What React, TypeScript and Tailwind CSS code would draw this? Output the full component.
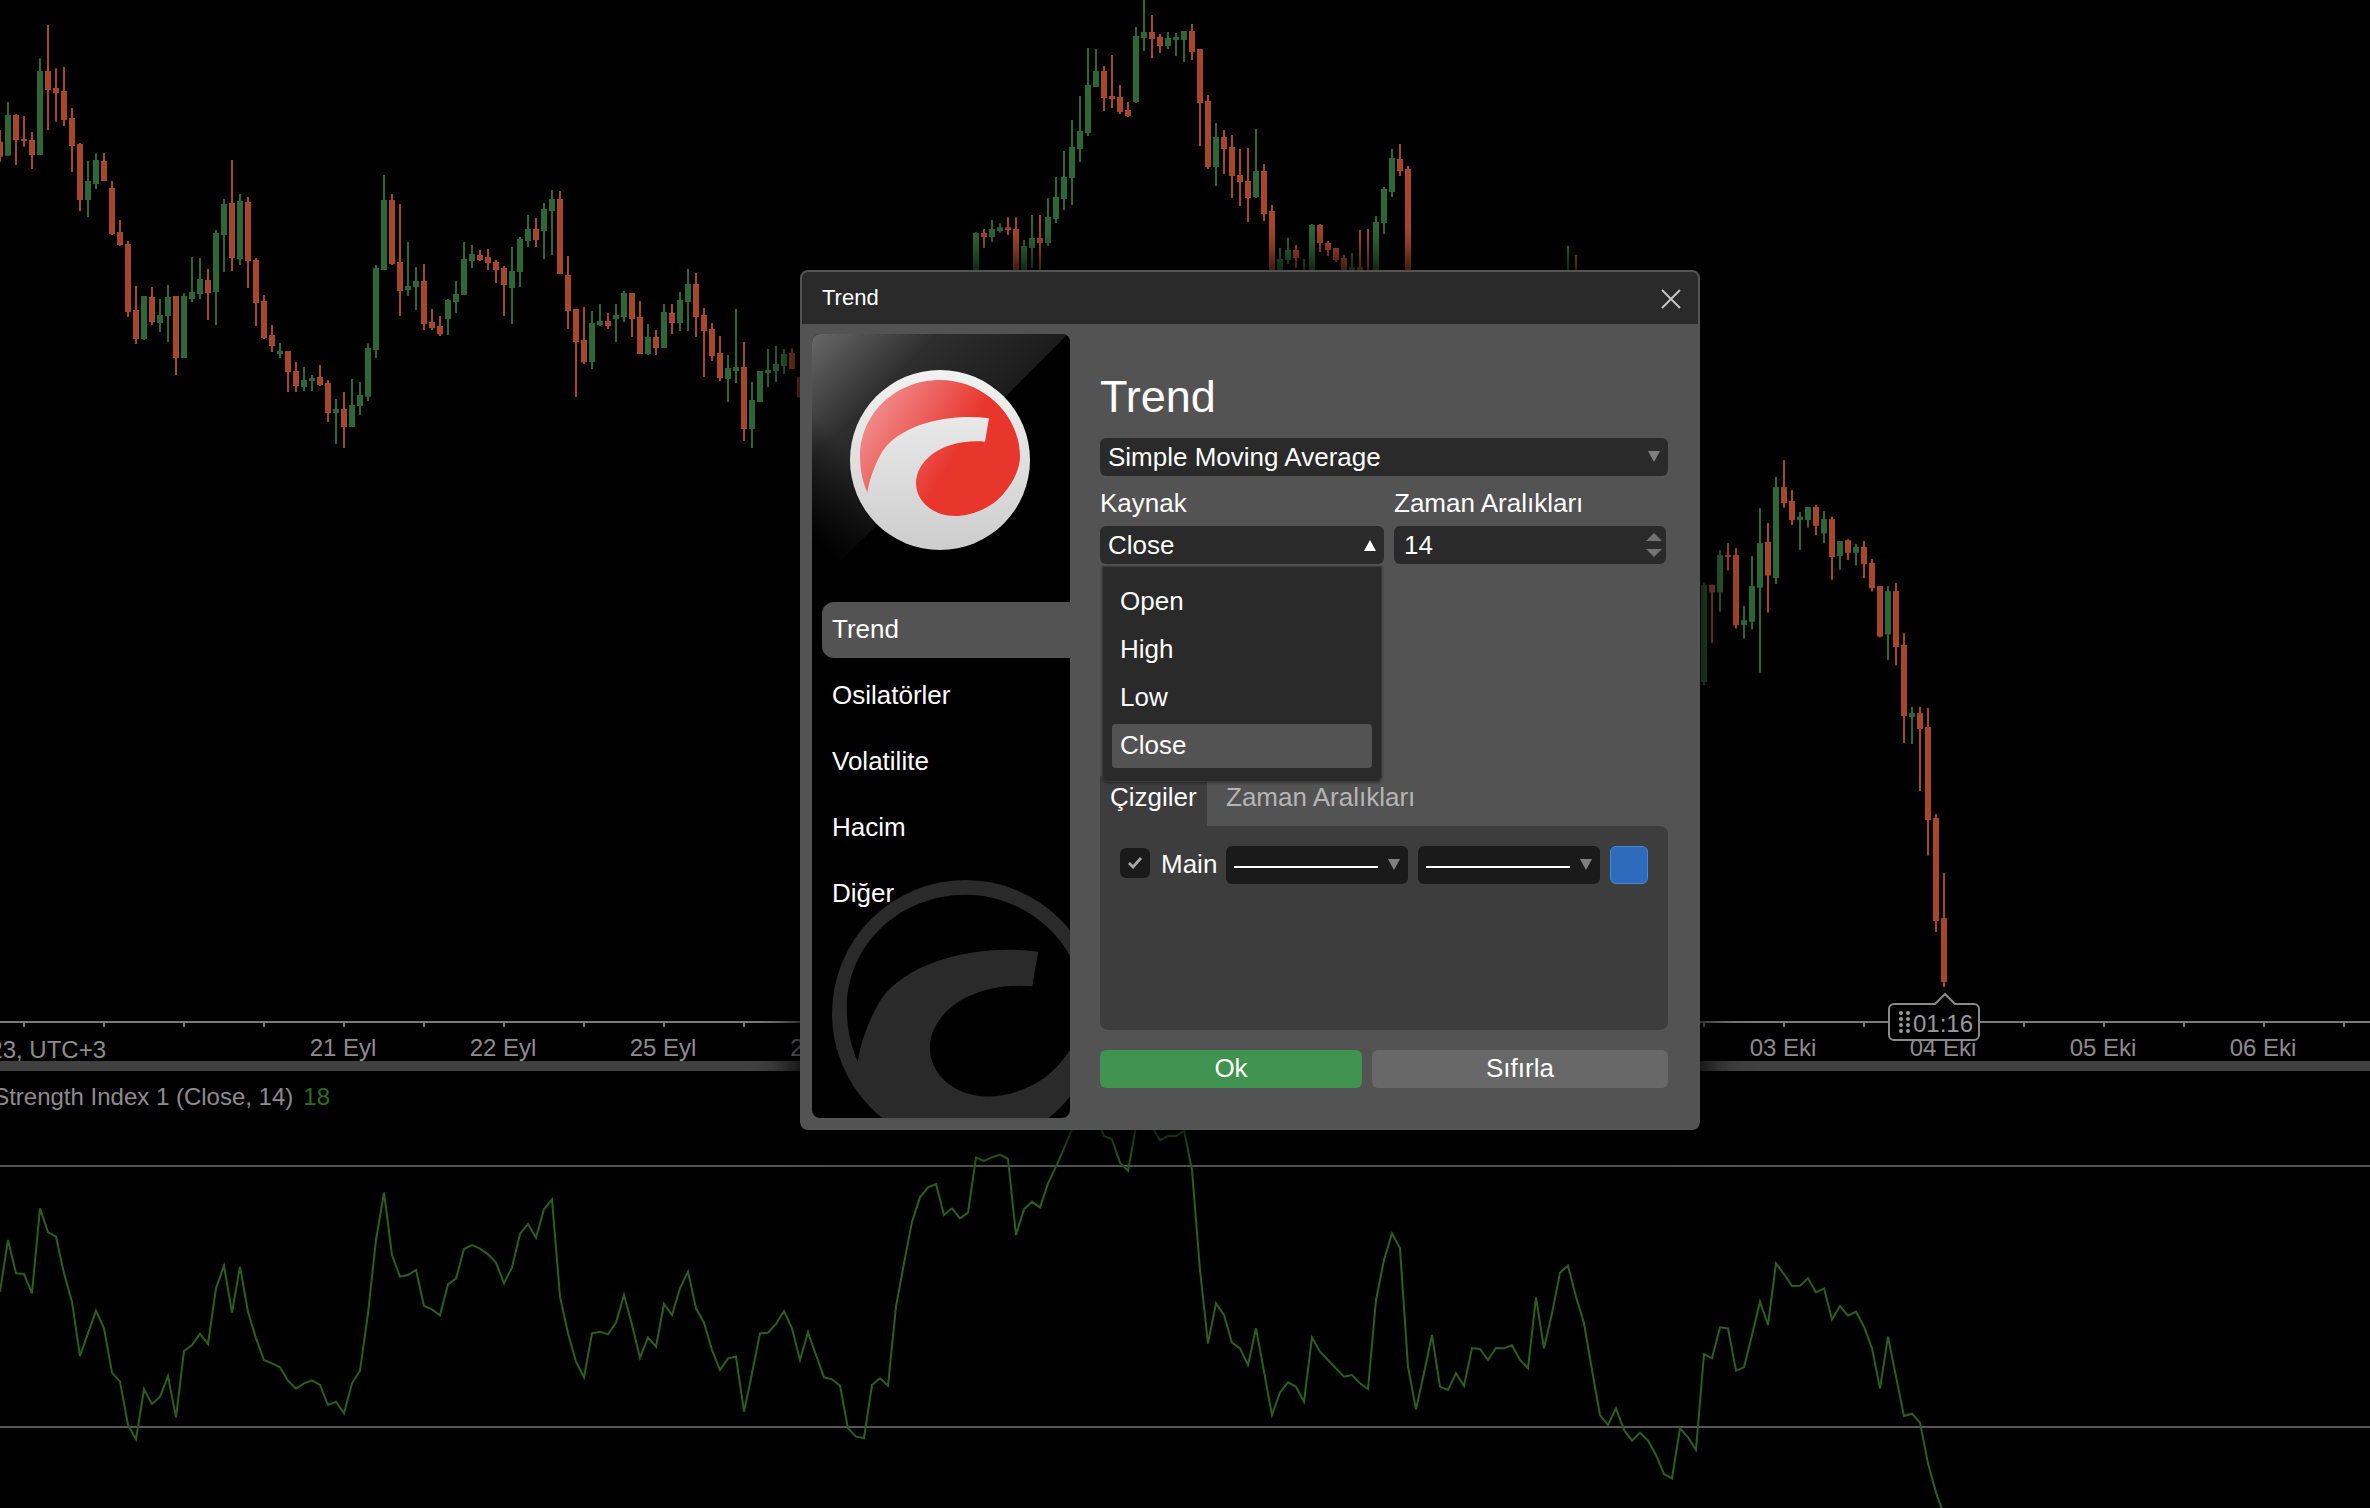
import React from "react";

// [wickTop, bodyTop, bodyBottom, wickBottom, isGreen]
type Row = [number, number, number, number, number];

const LEFT: Row[] = [
  [390,425,470,485,0],[306,345,467,467,1],[342,345,420,495,0],[348,417,423,440,0],[396,420,465,507,0],[175,213,465,465,1],
  [75,213,270,390,0],[205,264,279,365,0],[201,273,360,378,0],[324,354,438,516,0],[429,432,600,633,0],[483,543,600,651,1],
  [460,480,552,567,1],[459,483,543,543,0],[543,564,702,705,0],[660,696,735,738,0],[723,732,936,951,0],[858,930,1017,1032,0],
  [888,888,1017,1020,1],[861,891,966,975,0],[897,945,969,996,1],[855,891,948,1026,1],[888,888,1074,1125,0],[880,888,1074,1074,1],
  [771,876,897,906,1],[774,837,882,897,1],[807,840,879,960,0],[690,699,876,975,1],[597,612,705,816,1],[480,609,774,813,0],
  [582,603,777,795,1],[591,606,783,864,0],[774,780,909,978,0],[885,903,1014,1017,0],[975,1005,1038,1056,0],[1029,1052,1062,1074,1],
  [1053,1053,1116,1176,0],[1086,1113,1158,1176,0],[1101,1140,1161,1173,1],[1125,1134,1143,1173,1],[1095,1131,1155,1158,0],[1140,1149,1239,1266,0],
  [1197,1227,1239,1332,1],[1176,1227,1281,1344,0],[1137,1215,1281,1281,1],[1146,1185,1218,1245,1],[1030,1044,1190,1203,1],[795,804,1050,1074,1],
  [525,600,810,810,1],[582,600,792,795,0],[612,786,873,948,0],[726,858,870,888,1],[801,843,861,930,1],[792,843,972,990,0],
  [927,966,984,990,0],[948,978,1003,1008,0],[897,900,957,1005,1],[843,882,906,939,1],[726,777,885,885,1],[735,762,783,804,1],
  [750,765,780,783,0],[747,771,789,810,0],[780,786,810,849,0],[798,804,855,948,0],[741,813,864,972,1],[711,717,816,861,1],
  [645,687,723,741,1],[654,687,720,741,0],[609,627,693,777,1],[570,597,633,765,1],[573,597,822,822,0],[768,825,933,987,0],
  [927,927,1026,1191,0],[921,1020,1087,1092,0],[933,969,1086,1107,1],[912,963,975,978,1],[939,963,978,987,0],[912,945,957,1026,1],
  [873,879,951,966,1],[879,879,957,1011,0],[903,951,1062,1062,0],[972,1011,1062,1065,1],[990,1011,1044,1065,0],[912,936,1044,1044,1],
  [912,939,969,1002,0],[876,900,969,993,1],[807,852,906,993,1],[819,852,951,1011,0],[924,945,993,1131,0],[969,987,1068,1083,0],
  [1008,1059,1134,1143,0],[1065,1104,1137,1206,1],[927,1101,1113,1149,1],[1026,1101,1287,1323,0],[1146,1200,1287,1344,1],[1113,1113,1206,1206,1],
  [1047,1110,1119,1161,1],[1038,1092,1113,1146,1],[1047,1062,1098,1122,1],[1045,1059,1107,1107,0],[1132,1132,1192,1192,0],
];

const TOP: Row[] = [
  [697,699,815,815,1],[687,699,711,744,0],[660,687,711,726,1],[670,682,693,698,1],[652,682,690,705,0],[652,687,815,815,0],
  [720,738,815,815,1],[645,714,744,804,1],[645,714,729,815,0],[595,651,729,738,1],[531,591,657,669,1],[453,531,597,630,1],
  [360,441,534,615,1],[288,393,447,486,1],[144,255,399,408,1],[147,213,261,261,1],[198,213,294,333,0],[165,288,297,324,0],
  [255,291,336,342,0],[306,330,348,351,0],[81,108,306,309,1],[0,96,114,153,1],[45,96,117,174,0],[102,111,138,159,0],
  [96,114,138,147,1],[99,111,120,168,1],[93,93,120,186,1],[72,93,156,180,0],[147,147,309,438,0],[285,303,501,507,0],
  [369,411,501,558,1],[390,411,447,522,0],[405,441,528,594,0],[447,525,546,618,0],[444,543,594,666,0],[387,513,591,594,1],
  [492,513,642,663,0],[615,633,815,815,0],[744,777,815,815,1],[714,750,780,792,1],[735,750,774,804,0],[777,815,815,815,1],
  [672,675,815,815,1],[672,675,729,756,0],[723,729,750,768,0],[744,744,780,786,0],[765,774,815,815,0],[759,801,815,815,1],
  [690,801,815,815,0],[687,815,815,815,0],[648,666,815,815,1],[561,567,669,702,1],[447,474,576,591,1],[432,477,513,528,0],
  [498,507,815,815,0],
];

const FAR: Row[] = [
  [738,815,815,815,1],[765,815,815,815,0],
];

const RIGHT: Row[] = [
  [338,344,575,582,1],[344,344,362,482,0],[262,273,362,408,1],[245,273,278,310,0],[257,273,440,448,0],[394,428,440,472,1],
  [276,347,432,450,1],[162,245,351,553,1],[197,242,322,410,0],[88,112,328,342,1],[48,112,150,161,0],[119,145,190,202,0],
  [171,182,190,261,1],[159,159,190,208,1],[154,159,204,226,0],[169,188,222,245,1],[182,188,278,332,0],[240,240,276,308,1],
  [236,238,268,285,0],[247,254,268,298,1],[240,254,295,328,0],[283,292,352,360,0],[347,347,467,469,0],[347,359,462,523,1],
  [340,359,492,535,0],[459,487,656,720,0],[634,649,658,722,1],[634,649,687,834,0],[637,682,903,987,0],[889,898,1143,1169,0],
  [1029,1136,1288,1300,0],
];

const RSI_LEFT = [
  875,720,820,822,880,625,696,710,820,905,1068,1000,932,985,1118,1145,1275,1318,1168,1212,1190,1128,1252,1053,1035,1002,1032,865,797,938,
  800,935,1015,1080,1090,1102,1142,1166,1150,1141,1155,1215,1205,1240,1150,1112,940,720,578,765,830,825,810,918,928,946,853,836,747,735,
  746,763,788,850,802,702,672,713,628,598,890,1000,1085,1132,1000,995,1003,968,885,975,1073,1012,1040,912,945,865,815,925,968,1050,
  1110,1075,1070,1235,1120,1000,998,972,933,985,1080,
];

const RSI_MID = [
  697,765,832,838,857,985,1010,1014,855,835,857,620,490,365,292,262,252,345,325,355,338,173,183,172,164,177,405,328,305,323,
  250,200,145,88,40,20,40,108,118,188,212,80,40,80,121,108,108,92,210,510,730,610,645,728,745,795,685,815,945,878,
  847,860,905,712,755,780,805,830,825,850,867,600,480,400,445,800,928,820,705,860,870,820,858,744,747,780,744,745,736,780,
  805,592,745,640,518,497,590,670,810,945,975,925,990,1022,998,1022,1065,1122,1135,985,1012,1050,
];

const RSI_RIGHT = [
  1062,1075,982,985,1112,1102,1005,905,975,790,822,858,857,835,877,865,958,918,947,935,980,1045,1165,1010,1130,1248,1241,1268,1390,1478,1545,
];

const rsiPoints = [
  ...RSI_LEFT.map((z, i) => `${i * 8},${1000 + z / 3}`),
  ...RSI_MID.map((z, i) => `${(101 + i) * 8},${1100 + z / 3}`),
  ...RSI_RIGHT.map((z, i) => `${(213 + i) * 8},${1000 + z / 3}`),
].join(" ");

const Candles: React.FC<{ rows: Row[]; start: number; base?: number; scale?: number }> = ({ rows, start, base = 0, scale = 3 }) => (
  <>
    {rows.map((r, i) => {
      const x = (start + i) * 8;
      const fill = r[4] ? "#2e6636" : "#a6462a";
      return (
        <g key={i} fill={fill}>
          <rect x={x - 1} y={base + r[0] / scale} width={2} height={(r[3] - r[0]) / scale} />
          <rect x={x - 3} y={base + r[1] / scale} width={6} height={(r[2] - r[1]) / scale} />
        </g>
      );
    })}
  </>
);

const SWOOSH =
  "M232 697 C215 660 210 620 210 590 C210 460 318 360 450 360 C580 360 690 465 690 590 C690 640 650 700 610 730 C570 757 530 768 495 768 C430 768 378 725 378 670 C378 600 460 535 585 545 L597 475 C480 460 340 490 280 570 C258 605 240 650 232 697 Z";

const Logo: React.FC = () => (
  <svg width="180" height="180" viewBox="180 330 540 540" className="block">
    <defs>
      <linearGradient id="disc" x1="0" y1="0" x2="0" y2="1">
        <stop offset="0" stopColor="#f2f2f2" />
        <stop offset="1" stopColor="#cdcdcd" />
      </linearGradient>
      <linearGradient id="red" gradientUnits="userSpaceOnUse" x1="270" y1="390" x2="520" y2="540">
        <stop offset="0" stopColor="#f08e8e" />
        <stop offset="1" stopColor="#e8362d" />
      </linearGradient>
    </defs>
    <circle cx="450" cy="600" r="270" fill="url(#disc)" />
    <path d={SWOOSH} fill="url(#red)" />
  </svg>
);

const Watermark: React.FC = () => (
  <svg width="267" height="267" viewBox="180 330 540 540" className="absolute left-[20px] top-[546px]">
    <circle cx="450" cy="600" r="270" fill="#2a2a2a" />
    <path d={SWOOSH} fill="#000" />
  </svg>
);

const Arrow: React.FC<{ up?: boolean; color?: string }> = ({ up, color = "#808080" }) => (
  <svg width="12" height="11" viewBox="0 0 12 11" className={`block shrink-0 ${up ? "" : "-mt-[2px]"}`}>
    <polygon points={up ? "6,0 12,11 0,11" : "0,0 12,0 6,11"} fill={color} />
  </svg>
);

const LineSelect: React.FC = () => (
  <div className="flex h-[38px] w-[182px] items-center justify-between rounded-md bg-[#1a1a1a] pl-2 pr-2">
    <div className="mt-[4px] h-[2px] w-[144px] bg-white" />
    <Arrow />
  </div>
);

const NAV = ["Trend", "Osilatörler", "Volatilite", "Hacim", "Diğer"];
const OPTIONS = ["Open", "High", "Low", "Close"];

const App: React.FC = () => {
  return (
    <div className="relative h-[1508px] w-[2370px] overflow-hidden bg-black font-['Liberation_Sans',Arial,sans-serif] text-[26px] text-white">
      <svg width="2370" height="1021" viewBox="0 0 2370 1021" className="block">
        <Candles rows={LEFT} start={0} />
        <Candles rows={TOP} start={122} />
        <Candles rows={FAR} start={196} />
        <Candles rows={RIGHT} start={213} base={440} scale={2.376} />
      </svg>

      <svg width="2370" height="40" viewBox="0 1021 2370 40" className="block">
        <rect x="0" y="1021" width="2370" height="2" fill="#7a7a7a" />
        {Array.from({ length: 30 }, (_, n) => (
          <rect key={n} x={23 + n * 80} y="1023" width="2" height="4" fill="#7a7a7a" />
        ))}
        <g fill="#8c8c8c" fontSize="24" textAnchor="middle">
          <text x="106" y="1058" textAnchor="end">23, UTC+3</text>
          <text x="343" y="1056">21 Eyl</text>
          <text x="503" y="1056">22 Eyl</text>
          <text x="663" y="1056">25 Eyl</text>
          <text x="797" y="1056">2</text>
          <text x="1783" y="1056">03 Eki</text>
          <text x="1943" y="1056">04 Eki</text>
          <text x="2103" y="1056">05 Eki</text>
          <text x="2263" y="1056">06 Eki</text>
        </g>
      </svg>

      <div className="h-[10px] bg-[#404040]" />

      <div className="relative h-[437px]">
        <div className="flex h-[52px] w-[330px] items-center justify-end gap-[10px] whitespace-nowrap text-[24px] text-[#8c8c8c]">
          <span>Strength Index 1 (Close, 14)</span>
          <span className="text-[#2f6b1e]">18</span>
        </div>
        <svg width="2370" height="437" viewBox="0 1071 2370 437" className="absolute left-0 top-0">
          <rect x="0" y="1165" width="2370" height="2" fill="#555" />
          <rect x="0" y="1426" width="2370" height="2" fill="#555" />
          <polyline points={rsiPoints} fill="none" stroke="#2a601b" strokeWidth="2" />
        </svg>
      </div>

      {/* countdown tag on the axis */}
      <div className="absolute left-[1888px] top-[1003px] flex h-[38px] w-[92px] items-center gap-[3px] rounded-md border-2 border-[#8a8a8a] bg-black pl-[9px] text-[24px] text-[#9a9a9a]">
        <svg width="24" height="13" viewBox="0 0 24 13" className="absolute left-[43px] top-[-13px]">
          <path d="M1 13 L12 2 L23 13 Z" fill="#000" />
          <path d="M1 13 L12 2 L23 13" fill="none" stroke="#8a8a8a" strokeWidth="2" />
        </svg>
        <div className="grid grid-cols-2 gap-x-[3px] gap-y-[2px]">
          {Array.from({ length: 8 }, (_, n) => (
            <span key={n} className="size-[4px] rounded-full bg-[#9a9a9a]" />
          ))}
        </div>
        <span className="pt-[3px]">01:16</span>
      </div>

      {/* dialog */}
      <div className="absolute left-[800px] top-[270px] h-[860px] w-[900px] rounded-lg border-2 border-[#535353] bg-[#535353] shadow-[0_0_40px_6px_#000]">
        <div className="flex h-[52px] items-center justify-between rounded-t-md bg-[#2a2a2a] pl-[20px] pr-[17px] text-[22px]">
          <span className="pb-[2px]">Trend</span>
          <svg width="20" height="20" viewBox="0 0 20 20" className="mt-[2px]">
            <path d="M1 1 L19 19 M19 1 L1 19" stroke="#c4c4c4" strokeWidth="2" />
          </svg>
        </div>

        <div className="flex pl-[10px] pt-[10px]">
          <div className="relative h-[784px] w-[258px] overflow-hidden rounded-lg bg-black">
            <div className="h-[268px] bg-[linear-gradient(45deg,#000_12%,transparent_36%),linear-gradient(135deg,#686868_0%,#2e2e2e_24%,#1c1c1c_48.6%,#000_48.7%)] pl-[38px] pt-[36px]">
              <Logo />
            </div>
            <Watermark />
            <div className="relative flex flex-col gap-[10px] pl-[10px]">
              {NAV.map((item, i) => (
                <div
                  key={item}
                  className={`flex h-[56px] items-center rounded-l-xl pb-[2px] pl-[10px] ${i === 0 ? "bg-[#535353]" : ""}`}
                >
                  {item}
                </div>
              ))}
            </div>
          </div>

          <div className="ml-[30px] flex w-[568px] flex-col">
            <div className="mt-[37px] h-[52px] text-[45px] leading-[52px]">Trend</div>

            <div className="mt-[15px] flex h-[38px] items-center justify-between rounded-md bg-[#2a2a2a] pl-[8px] pr-[8px]">
              <span>Simple Moving Average</span>
              <Arrow />
            </div>

            <div className="flex h-[50px] items-end pb-[8px] leading-[30px]">
              <span className="w-[294px]">Kaynak</span>
              <span>Zaman Aralıkları</span>
            </div>

            <div className="relative flex gap-[10px]">
              <div className="flex h-[38px] w-[284px] items-center justify-between rounded-md bg-[#2a2a2a] pl-[8px] pr-[8px]">
                <span>Close</span>
                <Arrow up color="#fff" />
              </div>
              <div className="flex h-[38px] w-[272px] items-center justify-between rounded-md bg-[#2a2a2a] pl-[10px] pr-[4px]">
                <span>14</span>
                <svg width="16" height="24" viewBox="0 0 16 24" className="block">
                  <polygon points="8,0 16,8 0,8" fill="#737373" />
                  <polygon points="0,16 16,16 8,24" fill="#737373" />
                </svg>
              </div>

              <div className="absolute left-[2px] top-[40px] z-10 flex h-[216px] w-[280px] flex-col gap-[4px] rounded-b-md border border-[#3a3a3a] bg-[#2a2a2a] px-[9px] py-[13px] shadow-[0_1px_3px_#00000066]">
                {OPTIONS.map((option) => (
                  <div
                    key={option}
                    className={`flex h-[44px] items-center rounded-sm pb-[2px] pl-[8px] ${option === "Close" ? "bg-[#535353]" : ""}`}
                  >
                    {option}
                  </div>
                ))}
              </div>
            </div>

            <div className="mt-[212px] flex h-[50px]">
              <div className="w-[107px] bg-[#3d3d3d] pl-[10px] pt-[6px] leading-[30px]">Çizgiler</div>
              <div className="pl-[19px] pt-[6px] leading-[30px] text-[#b5b5b5]">Zaman Aralıkları</div>
            </div>

            <div className="h-[204px] rounded-b-lg rounded-tr-lg bg-[#3d3d3d] px-[20px] pt-[20px]">
              <div className="flex items-center">
                <div className="mb-[4px] flex size-[30px] items-center justify-center rounded-md bg-[#1a1a1a]">
                  <svg width="16" height="14" viewBox="0 0 16 14">
                    <path d="M2 7 L6 11 L14 2" fill="none" stroke="#a8a8a8" strokeWidth="2.8" />
                  </svg>
                </div>
                <span className="mb-[2px] ml-[11px] w-[65px] leading-[30px]">Main</span>
                <div className="flex gap-[10px]">
                  <LineSelect />
                  <LineSelect />
                </div>
                <div className="ml-[10px] h-[38px] w-[38px] rounded-md border border-[#4b86d4] bg-[#2e6bbd]" />
              </div>
            </div>

            <div className="mt-[20px] flex gap-[10px]">
              <div className="flex h-[38px] w-[262px] items-center justify-center rounded-md bg-[#40924f] pb-[2px]">Ok</div>
              <div className="flex h-[38px] w-[296px] items-center justify-center rounded-md bg-[#686868] pb-[2px]">Sıfırla</div>
            </div>
          </div>
        </div>
      </div>
    </div>
  );
};

export default App;
